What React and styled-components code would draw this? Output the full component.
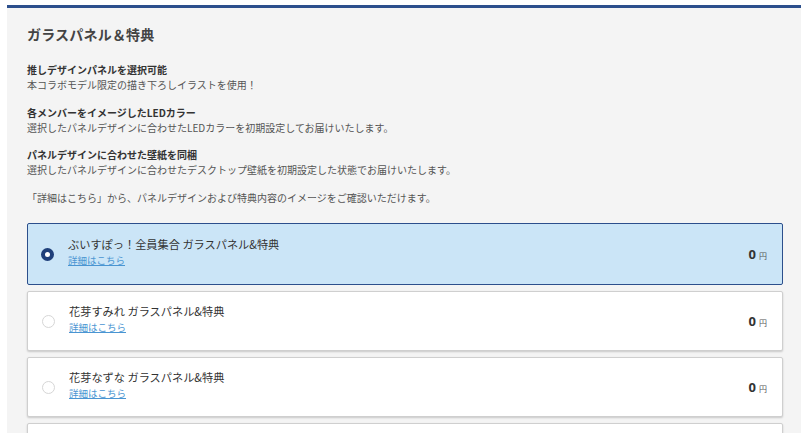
import React from 'react';
import styled, { createGlobalStyle } from 'styled-components';

const GlobalStyle = createGlobalStyle`
    body {
        margin: 0;
        background: #ffffff;
        font-family: "Noto Sans CJK JP", "Noto Sans", sans-serif;
        color: #333333;
    }
`;

const sections = [
    {
        title: '推しデザインパネルを選択可能',
        text: '本コラボモデル限定の描き下ろしイラストを使用！',
    },
    {
        title: '各メンバーをイメージしたLEDカラー',
        text: '選択したパネルデザインに合わせたLEDカラーを初期設定してお届けいたします。',
    },
    {
        title: 'パネルデザインに合わせた壁紙を同梱',
        text: '選択したパネルデザインに合わせたデスクトップ壁紙を初期設定した状態でお届けいたします。',
    },
];

const options = [
    { name: 'ぶいすぽっ！全員集合 ガラスパネル&特典', price: 0, selected: true },
    { name: '花芽すみれ ガラスパネル&特典', price: 0 },
    { name: '花芽なずな ガラスパネル&特典', price: 0 },
    { name: '小雀とと ガラスパネル&特典', price: 0 },
];

export default function App() {
    return (
        <Page>
            <GlobalStyle />
            <Panel>
                <Heading>ガラスパネル＆特典</Heading>
                {sections.map((s) => (
                    <Section key={s.title}>
                        <BoldText>{s.title}</BoldText>
                        <NormalText>{s.text}</NormalText>
                    </Section>
                ))}
                <Note>「詳細はこちら」から、パネルデザインおよび特典内容のイメージをご確認いただけます。</Note>
                <OptionList>
                    {options.map((o) => (
                        <Option key={o.name} $selected={o.selected}>
                            <Radio $selected={o.selected} />
                            <OptionBody>
                                <OptionName>{o.name}</OptionName>
                                <DetailLink href="#">詳細はこちら</DetailLink>
                            </OptionBody>
                            <Price>
                                <Amount>{o.price}</Amount>
                                <Yen>円</Yen>
                            </Price>
                        </Option>
                    ))}
                </OptionList>
            </Panel>
        </Page>
    );
}

const Page = styled.div`
    height: 433px;
    overflow: hidden;
    padding: 5px 0 0 7px;
    box-sizing: border-box;
`;

const Panel = styled.div`
    background: #f4f4f4;
    border-top: 3px solid #2c4f8c;
    padding: 16px 18px 0 20px;
    min-height: 500px;
`;

const Heading = styled.h2`
    margin: 0 0 18px;
    font-size: 14px;
    line-height: 20px;
    font-weight: bold;
    color: #444444;
    letter-spacing: 0.2px;
`;

const Section = styled.div`
    margin-bottom: 12.5px;
`;

const BoldText = styled.p`
    margin: 0;
    font-size: 10px;
    line-height: 15px;
    font-weight: bold;
    color: #333333;
`;

const NormalText = styled.p`
    margin: 0;
    font-size: 10px;
    line-height: 15px;
    color: #555555;
`;

const Note = styled(NormalText)`
    margin-bottom: 18.5px;
`;

const OptionList = styled.div`
    display: flex;
    flex-direction: column;
    gap: 6px;
`;

const Option = styled.label`
    display: flex;
    align-items: center;
    height: ${(p) => (p.$selected ? '62px' : '60px')};
    box-sizing: border-box;
    padding: 0 15px 0 ${(p) => (p.$selected ? '13px' : '14px')};
    background: ${(p) => (p.$selected ? '#cbe5f7' : '#ffffff')};
    border: 1px solid ${(p) => (p.$selected ? '#2c4f8c' : '#cfcfcf')};
    border-radius: 2px;
    box-shadow: ${(p) => (p.$selected ? 'none' : '0 1px 2px rgba(0, 0, 0, 0.18)')};
`;

const Radio = styled.span`
    flex: none;
    width: 13px;
    height: 13px;
    box-sizing: border-box;
    border-radius: 50%;
    background: #ffffff;
    border: ${(p) => (p.$selected ? '4px solid #1f3f7a' : '1px solid #d6d6d6')};
    margin-right: 14px;
`;

const OptionBody = styled.div`
    flex: 1;
    display: flex;
    flex-direction: column;
    padding-bottom: 4px;
`;

const OptionName = styled.span`
    font-size: 11.2px;
    line-height: 16px;
    color: #333333;
`;

const DetailLink = styled.a`
    font-size: 9.5px;
    line-height: 16px;
    color: #4a95d2;
    text-decoration: underline;
    align-self: flex-start;
`;

const Price = styled.div`
    display: flex;
    align-items: baseline;
    gap: 3px;
`;

const Amount = styled.span`
    font-family: "Open Sans", "Noto Sans", sans-serif;
    font-size: 13px;
    font-weight: bold;
    color: #333333;
`;

const Yen = styled.span`
    font-size: 8px;
    color: #555555;
`;
